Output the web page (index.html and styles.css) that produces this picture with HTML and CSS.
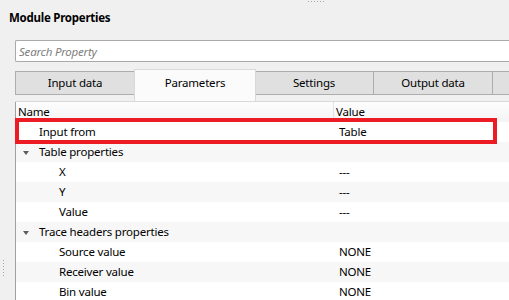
FILE: index.html
```html
<!DOCTYPE html>
<html lang="en">
<head>
    <meta charset="UTF-8">
    <title>Module Properties</title>
    <link rel="stylesheet" href="styles.css">
</head>
<body>
    <div class="grip-top">
        <span></span><span></span><span></span><span></span><span></span><span></span>
    </div>
    <div class="grip-left">
        <span></span><span></span><span></span><span></span><span></span><span></span>
    </div>

    <div class="title">Module Properties</div>

    <div class="search">
        <input class="search-input" type="text" placeholder="Search Property">
    </div>

    <div class="tabs">
        <div class="tab">Input data</div>
        <div class="tab active">Parameters</div>
        <div class="tab">Settings</div>
        <div class="tab">Output data</div>
        <div class="tab last"></div>
    </div>

    <div class="grid">
        <div class="row header">
            <div class="cell name">Name</div>
            <div class="cell value">Value</div>
        </div>
        <div class="row">
            <div class="cell name lvl1">Input from</div>
            <div class="cell value">Table</div>
        </div>
        <div class="row alt">
            <div class="cell name lvl1"><span class="arrow"></span>Table properties</div>
            <div class="cell value"></div>
        </div>
        <div class="row">
            <div class="cell name lvl2">X</div>
            <div class="cell value">---</div>
        </div>
        <div class="row alt">
            <div class="cell name lvl2">Y</div>
            <div class="cell value">---</div>
        </div>
        <div class="row">
            <div class="cell name lvl2">Value</div>
            <div class="cell value">---</div>
        </div>
        <div class="row alt">
            <div class="cell name lvl1"><span class="arrow"></span>Trace headers properties</div>
            <div class="cell value"></div>
        </div>
        <div class="row">
            <div class="cell name lvl2">Source value</div>
            <div class="cell value">NONE</div>
        </div>
        <div class="row alt">
            <div class="cell name lvl2">Receiver value</div>
            <div class="cell value">NONE</div>
        </div>
        <div class="row">
            <div class="cell name lvl2">Bin value</div>
            <div class="cell value">NONE</div>
        </div>
    </div>

    <!-- highlight drawn over the first row -->
    <div class="highlight"></div>
</body>
</html>
```

FILE: styles.css
```css
* {
    margin: 0;
    padding: 0;
    box-sizing: border-box;
}

body {
    font-family: "Noto Sans", "Open Sans", sans-serif;
    font-size: 11.5px;
    letter-spacing: -0.2px;
    color: #000;
    background: #f0f0f0;
    width: 509px;
    height: 300px;
    overflow: hidden;
    position: relative;
}

.grip-top {
    position: absolute;
    top: 1px;
    left: 308px;
    display: flex;
    gap: 2px;
}

.grip-top span,
.grip-left span {
    width: 1px;
    height: 1px;
    background: #a8a8a8;
}

.grip-left {
    position: absolute;
    left: 3px;
    top: 260px;
    display: flex;
    flex-direction: column;
    gap: 2px;
}

.title {
    height: 40px;
    padding: 10px 0 0 9px;
    line-height: 16px;
    font-weight: 700;
    font-size: 11.5px;
    letter-spacing: -0.25px;
}

.search {
    margin-left: 15px;
}

.search-input {
    display: block;
    width: 100%;
    height: 22px;
    border: 1px solid #a9a9a9;
    border-right: none;
    border-radius: 2px 0 0 2px;
    background: #fff;
    padding: 0 3px;
    font-family: inherit;
    font-size: 11.5px;
    letter-spacing: -0.2px;
    outline: none;
}

.search-input::placeholder {
    color: #808080;
    font-style: italic;
}

.tabs {
    display: flex;
    margin: 7px 0 0 15px;
    height: 33px;
    border-bottom: 1px solid #d9d9d9;
    align-items: flex-start;
    overflow: hidden;
}

.tab {
    flex: 0 0 120px;
    height: 24px;
    margin-top: 2px;
    margin-left: -1px;
    background: #e0e0e0;
    border: 1px solid #adadad;
    text-align: center;
    line-height: 22px;
}

.tab:first-child {
    margin-left: 0;
}

.tab.last {
    flex: 1 1 auto;
    border-right: none;
}

.tab.active {
    flex-basis: 122px;
    height: 33px;
    margin-top: 0;
    margin-right: -1px;
    background: #fbfbfb;
    border-color: #d9d9d9;
    border-bottom: none;
    line-height: 25px;
    position: relative;
    z-index: 1;
}

.grid {
    margin-left: 15px;
    border-left: 1px solid #a0a0a0;
    background: #fff;
}

.row {
    display: grid;
    grid-template-columns: 317px 1fr;
    height: 20px;
    line-height: 20px;
    background: #fff;
}

.row.alt {
    background: #f7f7f7;
}

.row.header {
    background: linear-gradient(#fdfdfd, #f4f4f4);
}

.cell {
    white-space: nowrap;
    overflow: hidden;
}

.header .name {
    padding-left: 2px;
}

.header .value {
    border-left: 1px solid #e2e2e2;
    padding-left: 2px;
}

.name.lvl1 {
    padding-left: 23px;
    position: relative;
}

.name.lvl2 {
    padding-left: 43px;
}

.value {
    padding-left: 6px;
}

.arrow {
    position: absolute;
    left: 7px;
    top: 9px;
    width: 0;
    height: 0;
    border-left: 3.5px solid transparent;
    border-right: 3.5px solid transparent;
    border-top: 4px solid #5c5c5c;
}

.highlight {
    position: absolute;
    left: 15px;
    top: 118px;
    width: 482px;
    height: 26px;
    border: 4px solid #ed1c24;
}
```
